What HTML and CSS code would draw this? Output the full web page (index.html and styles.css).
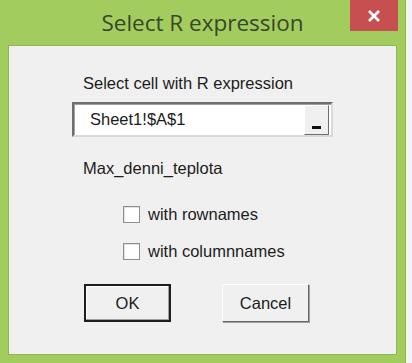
FILE: index.html
```html
<!DOCTYPE html>
<html lang="en">
  <head>
    <meta charset="UTF-8" />
    <title>Select R expression</title>
    <link rel="stylesheet" href="styles.css">
  </head>
  <body>
    <div class="window">
      <div class="titlebar">
        <span class="title">Select R expression</span>
        <div class="close">
          <svg width="14" height="14" viewBox="0 0 14 14">
            <path d="M2 2 L12 12 M12 2 L2 12" stroke="#fff" stroke-width="2.6" />
          </svg>
        </div>
      </div>
      <div class="client">
        <p class="lbl first">Select cell with R expression</p>
        <div class="refedit">
          <span class="reftext">Sheet1!$A$1</span>
          <div class="refbtn"><span class="dash"></span></div>
        </div>
        <p class="lbl name">Max_denni_teplota</p>
        <label class="chk"><span class="box"></span>with rownames</label>
        <label class="chk"><span class="box"></span>with columnnames</label>
        <div class="buttons">
          <div class="btn default">OK</div>
          <div class="btn">Cancel</div>
        </div>
      </div>
    </div>
  </body>
</html>
```

FILE: styles.css
```css
* {
  box-sizing: border-box;
  margin: 0;
  padding: 0;
}
body {
  background-color: #f4f4f4;
  font-family: "Liberation Sans", Arial, sans-serif;
  font-size: 16.5px;
  color: #1c1c1c;
  overflow: hidden;
}
.window {
  width: 406px;
  height: 363px;
  display: flex;
  flex-direction: column;
  padding: 0 9px 9px 9px;
  background-color: #a2cd5e;
  border-right: 1px solid #8fb852;
}
.titlebar {
  position: relative;
  height: 46px;
  flex: none;
  margin: 0 -9px;
  text-align: center;
}
.title {
  display: inline-block;
  padding-top: 7px;
  font-family: "Open Sans", "Noto Sans", sans-serif;
  font-size: 22.5px;
  color: #39452c;
}
.close {
  position: absolute;
  top: 0;
  right: 7px;
  width: 48px;
  height: 31px;
  background-color: #c74f4f;
  display: flex;
  align-items: center;
  justify-content: center;
}
.client {
  flex: 1;
  margin-right: 0;
  background-color: #f0f0f0;
  box-shadow: 0 0 0 1px #8fb852;
  padding: 28px 0 0 63px;
}
.lbl {
  padding-left: 11px;
  line-height: 19px;
}
.refedit {
  margin-top: 9px;
  width: 261px;
  height: 35px;
  background-color: #fff;
  border: 2px solid;
  border-color: #6e6e6e #d9d9d9 #d9d9d9 #6e6e6e;
  box-shadow: inset 1px 1px 0 #a0a0a0;
  display: flex;
  align-items: center;
}
.reftext {
  flex: 1;
  padding-left: 16px;
}
.refbtn {
  width: 25px;
  height: 30px;
  margin-right: 2px;
  background-color: #f0f0f0;
  border: 1px solid;
  border-color: #fff #6e6e6e #6e6e6e #fff;
  display: flex;
  justify-content: center;
  align-items: flex-end;
  padding-bottom: 5px;
}
.dash {
  width: 9px;
  height: 3px;
  background-color: #111;
}
.name {
  margin-top: 22px;
}
.chk {
  display: flex;
  align-items: center;
  gap: 8px;
  margin-left: 51px;
  height: 17px;
  margin-top: 28px;
}
.chk + .chk {
  margin-top: 20px;
}
.box {
  width: 17px;
  height: 17px;
  background-color: #fff;
  border: 1px solid #8e8f8f;
  box-shadow: inset 1px 1px 0 #e0e0e0;
}
.buttons {
  display: flex;
  gap: 51px;
  margin: 24px 0 0 12px;
}
.btn {
  width: 87px;
  height: 38px;
  display: flex;
  align-items: center;
  justify-content: center;
  background-color: #f0f0f0;
  border: 1px solid;
  border-color: #fff #696969 #696969 #fff;
  box-shadow: 1px 1px 0 #a0a0a0;
}
.btn.default {
  border: 2px solid #1e1e1e;
  box-shadow: inset -1px -1px 0 #a0a0a0, inset 1px 1px 0 #fff;
}
```
